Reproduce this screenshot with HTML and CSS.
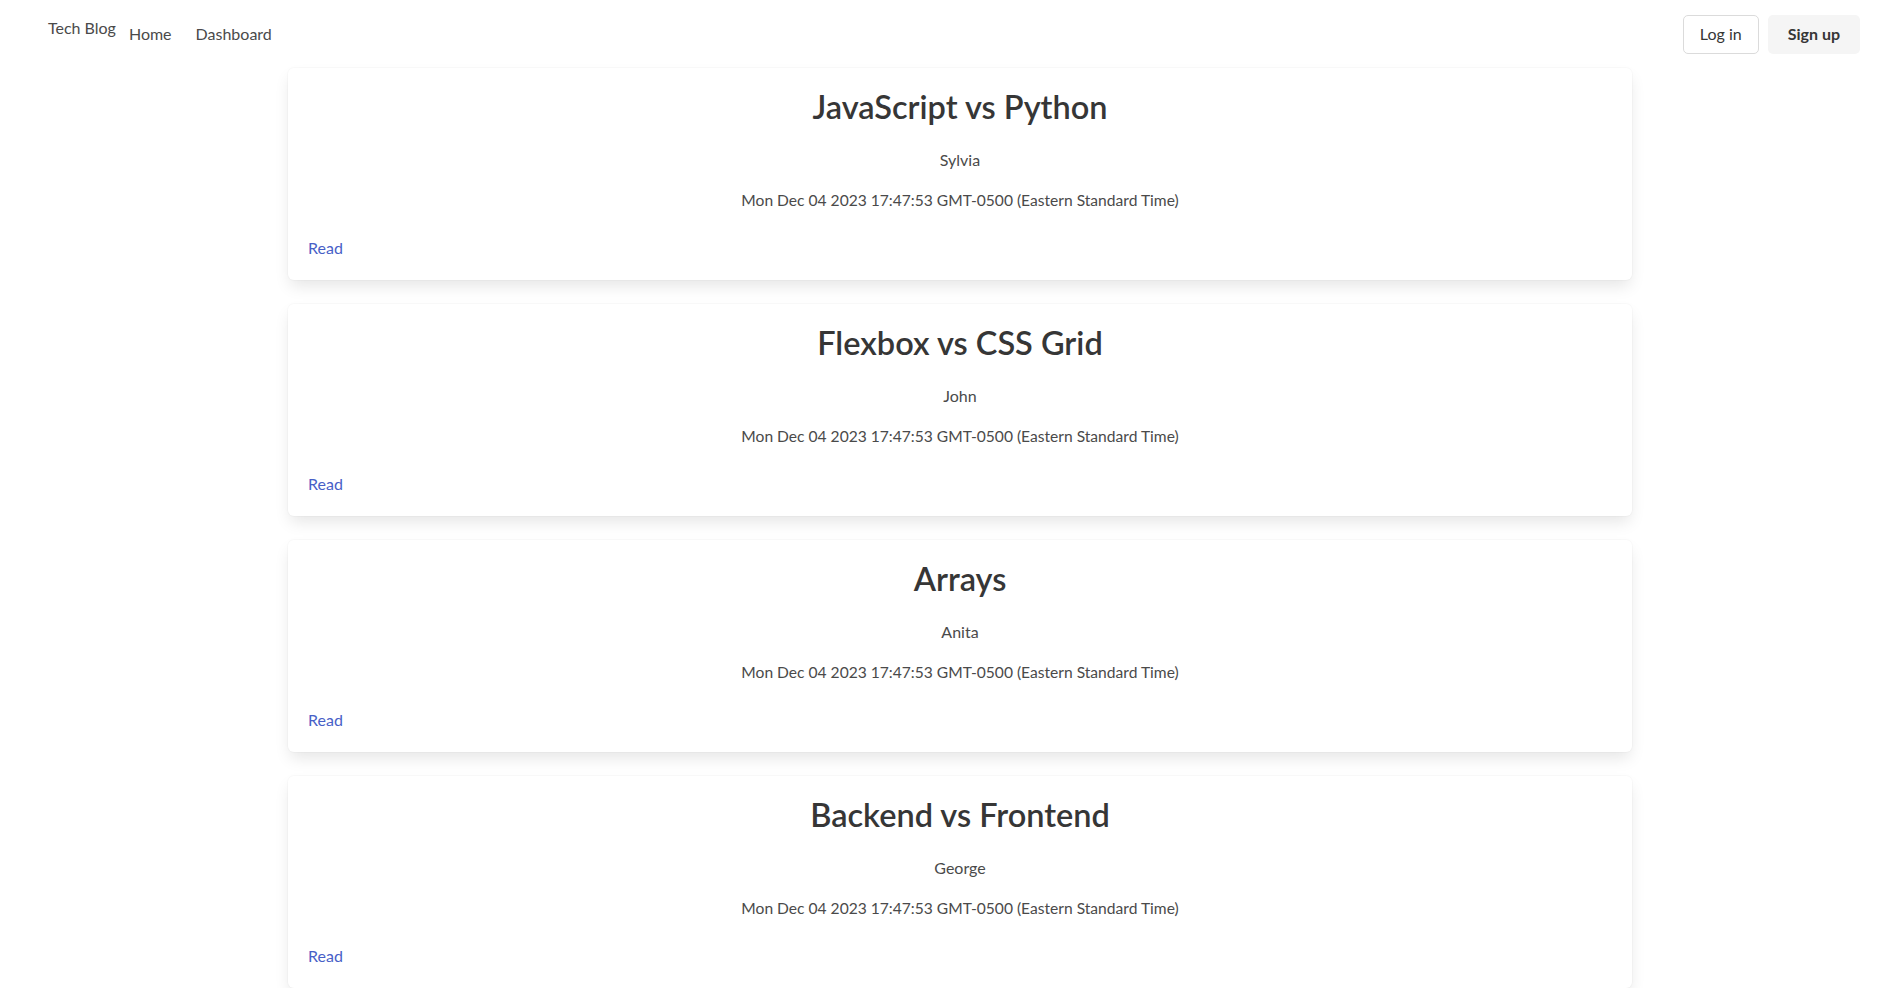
FILE: index.html
```html
<!DOCTYPE html>
<html lang="en">
<head>
<meta charset="utf-8">
<title>Tech Blog</title>
<link rel="stylesheet" href="styles.css">
</head>
<body>
<nav class="navbar">
  <div class="navbar-start">
    <a class="brand" href="#">Tech Blog</a>
    <a class="nav-item" href="#">Home</a>
    <a class="nav-item" href="#">Dashboard</a>
  </div>
  <div class="navbar-end">
    <a class="btn btn-outline" href="#">Log in</a>
    <a class="btn btn-light" href="#">Sign up</a>
  </div>
</nav>
<main class="page">
  <div class="container">
    <article class="card">
      <h2 class="card-title">JavaScript vs Python</h2>
      <p class="card-author">Sylvia</p>
      <p class="card-date">Mon Dec 04 2023 17:47:53 GMT-0500 (Eastern Standard Time)</p>
      <a class="card-link" href="#">Read</a>
    </article>
    <article class="card">
      <h2 class="card-title">Flexbox vs CSS Grid</h2>
      <p class="card-author">John</p>
      <p class="card-date">Mon Dec 04 2023 17:47:53 GMT-0500 (Eastern Standard Time)</p>
      <a class="card-link" href="#">Read</a>
    </article>
    <article class="card">
      <h2 class="card-title">Arrays</h2>
      <p class="card-author">Anita</p>
      <p class="card-date">Mon Dec 04 2023 17:47:53 GMT-0500 (Eastern Standard Time)</p>
      <a class="card-link" href="#">Read</a>
    </article>
    <article class="card">
      <h2 class="card-title">Backend vs Frontend</h2>
      <p class="card-author">George</p>
      <p class="card-date">Mon Dec 04 2023 17:47:53 GMT-0500 (Eastern Standard Time)</p>
      <a class="card-link" href="#">Read</a>
    </article>
  </div>
</main>
</body>
</html>
```

FILE: styles.css
```css
* { box-sizing: border-box; }

html, body {
  margin: 0;
  padding: 0;
  background: #fff;
}

body {
  font-family: Lato, "Noto Sans", "Liberation Sans", sans-serif;
  font-size: 16px;
  line-height: 1.5;
  color: #4a4a4a;
  overflow: hidden;
}

a { text-decoration: none; }

.navbar {
  height: 68px;
  display: flex;
  align-items: center;
  justify-content: space-between;
  padding: 0 43px 0 48px;
}

.navbar-start {
  display: flex;
  align-items: center;
}

.brand {
  color: #4a4a4a;
  margin-top: -12px;
  margin-right: 13px;
}

.nav-item {
  color: #4a4a4a;
  margin-right: 24px;
}

.navbar-end {
  display: flex;
  gap: 9px;
}

.btn {
  display: inline-flex;
  align-items: center;
  justify-content: center;
  height: 39px;
  padding: 0 16px;
  border: 1px solid #dbdbdb;
  border-radius: 5px;
  color: #363636;
}

.btn-light {
  background: #f5f5f5;
  border-color: transparent;
  font-weight: 700;
  padding: 0 19px;
}

.page {
  padding-left: 17px;
}

.container {
  width: 1344px;
  margin: 0 auto;
  display: flex;
  flex-direction: column;
  gap: 24px;
}

.card {
  background: #fff;
  border-radius: 6px;
  box-shadow: 0 8px 16px -2px rgba(10, 10, 10, 0.1), 0 0 0 1px rgba(10, 10, 10, 0.02);
  padding: 21px 20px 20px 20px;
  display: flex;
  flex-direction: column;
}

.card-title {
  margin: 0 0 23px;
  font-size: 32.5px;
  line-height: 36px;
  font-weight: 600;
  color: #363636;
  text-align: center;
}

.card-author {
  margin: 0 0 16px;
  text-align: center;
}

.card-date {
  margin: 0 0 24px;
  font-size: 15.6px;
  line-height: 24px;
  text-align: center;
}

.card-link {
  color: #485fc7;
  align-self: flex-start;
}
```
